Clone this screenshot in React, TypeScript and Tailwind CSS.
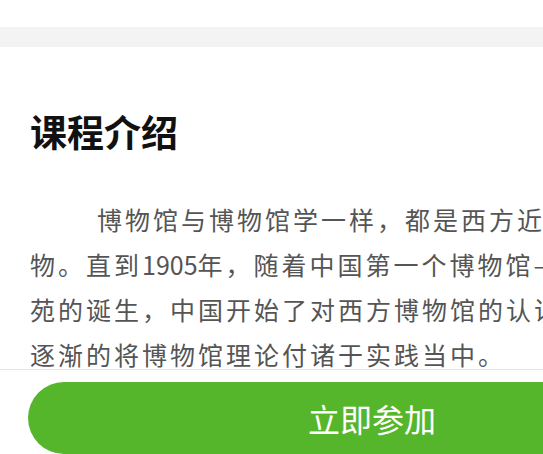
import React from "react";

export default function App() {
  return (
    <div
      className="relative h-[454px] w-[543px] overflow-hidden bg-white"
      style={{ fontFamily: '"Noto Sans CJK SC", "Noto Sans", sans-serif' }}
    >
      <div className="h-[27px]" />
      <div className="h-[20px] bg-[#f3f3f3]" />

      <section className="pl-[30px]">
        <h2 className="mt-[62px] text-[37px] font-bold leading-[44px] text-[#111]">
          课程介绍
        </h2>
        <p className="mt-[44px] whitespace-nowrap text-[25px] leading-[45px] tracking-[3px] text-[#555]">
          <span className="block pl-[67px]">博物馆与博物馆学一样，都是西方近代的产</span>
          <span className="block">
            物。直到<span className="tracking-normal">1905</span>年，随着中国第一个博物馆——南通博物
          </span>
          <span className="block">苑的诞生，中国开始了对西方博物馆的认识，并</span>
          <span className="block">逐渐的将博物馆理论付诸于实践当中。</span>
        </p>
      </section>

      <footer className="absolute left-0 top-[369px] h-[90px] w-[760px] border-t border-[#e5e5e5] bg-white pl-[28px] pt-[12px]">
        <button className="flex h-[72px] w-[688px] items-center justify-center rounded-full bg-[#55b62b] text-[32px] text-white">
          立即参加
        </button>
      </footer>
    </div>
  );
}
